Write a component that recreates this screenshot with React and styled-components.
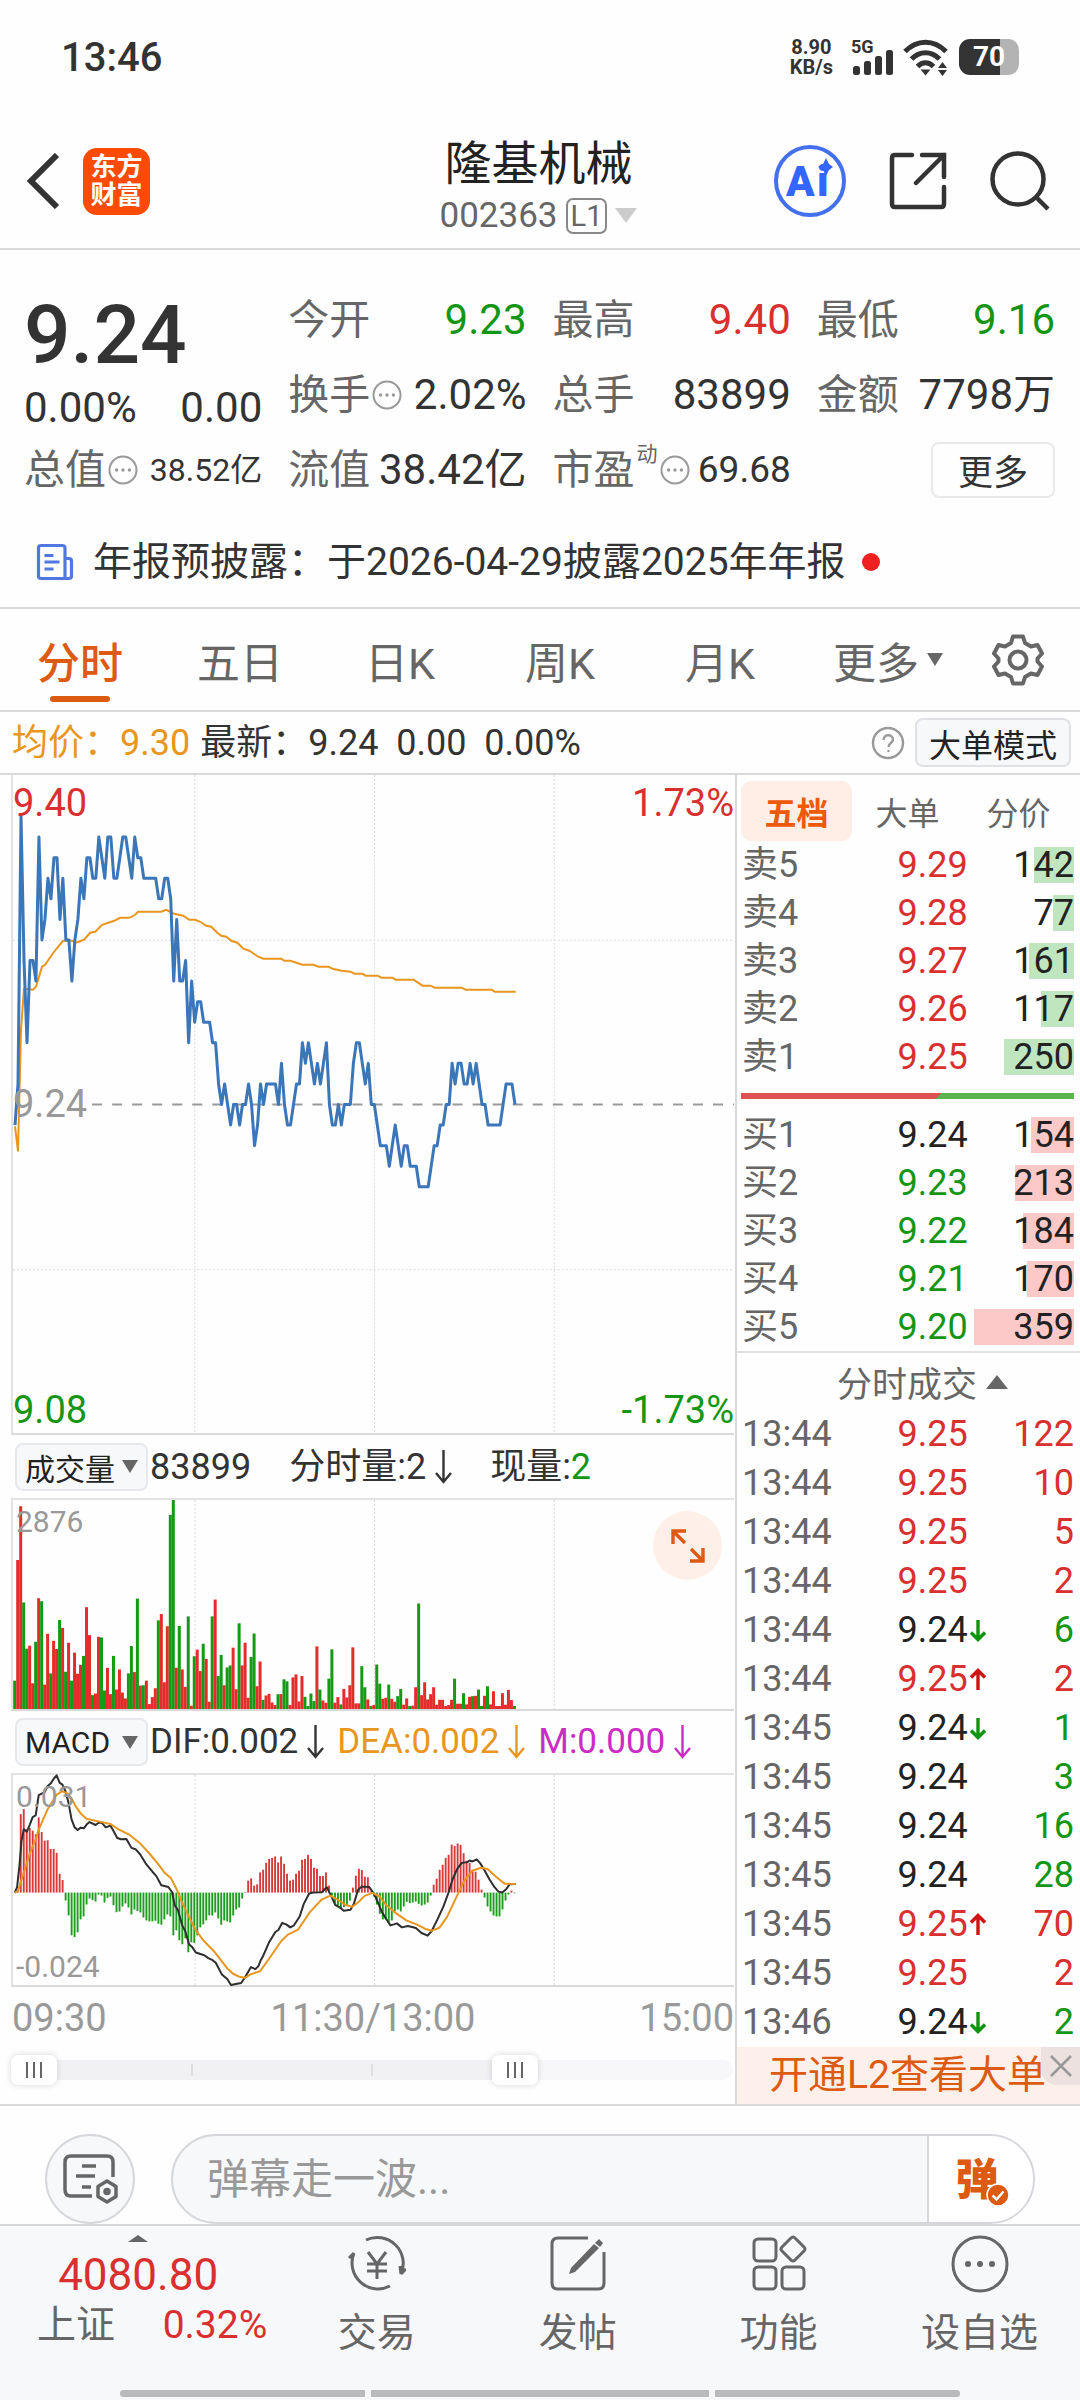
import React, { useState } from 'react';
import styled, { createGlobalStyle } from 'styled-components';

const RED = '#d92f2f';
const GREEN = '#149614';
const ORANGE = '#dd5a12';
const AMBER = '#e8961e';
const INK = '#333333';
const GREY = '#666666';
const MUTED = '#999999';
const LINE = '#d9d9d9';
const PANEL = '#f7f8fa';

const tones = { red: RED, green: GREEN, ink: INK, black: '#222222', grey: GREY, amber: AMBER, purple: '#cc2bc4' };

const GlobalStyle = createGlobalStyle`
  * {
    box-sizing: border-box;
  }

  body {
    margin: 0;
    background: #fefefe;
    color: ${INK};
    font-family: Roboto, 'Noto Sans CJK SC', sans-serif;
  }

  button, input {
    font-family: inherit;
    color: inherit;
  }

  button {
    padding: 0;
    border: none;
    background: none;
    cursor: pointer;
  }

  svg {
    display: block;
    flex: none;
  }
`;

/* ---------- data ---------- */

const quotes = [
  { label: '今开', value: '9.23', tone: 'green' },
  { label: '最高', value: '9.40', tone: 'red' },
  { label: '最低', value: '9.16', tone: 'green' },
  { label: '换手', value: '2.02%', tone: 'ink', info: true },
  { label: '总手', value: '83899', tone: 'ink' },
  { label: '金额', value: '7798万', tone: 'ink' },
];

const periods = ['分时', '五日', '日K', '周K', '月K'];

const sells = [
  ['卖5', '9.29', 142, 'red'],
  ['卖4', '9.28', 77, 'red'],
  ['卖3', '9.27', 161, 'red'],
  ['卖2', '9.26', 117, 'red'],
  ['卖1', '9.25', 250, 'red'],
];

const buys = [
  ['买1', '9.24', 154, 'black'],
  ['买2', '9.23', 213, 'green'],
  ['买3', '9.22', 184, 'green'],
  ['买4', '9.21', 170, 'green'],
  ['买5', '9.20', 359, 'green'],
];

const trades = [
  ['13:44', '9.25', '', 122, 'red'],
  ['13:44', '9.25', '', 10, 'red'],
  ['13:44', '9.25', '', 5, 'red'],
  ['13:44', '9.25', '', 2, 'red'],
  ['13:44', '9.24', 'down', 6, 'green'],
  ['13:44', '9.25', 'up', 2, 'red'],
  ['13:45', '9.24', 'down', 1, 'green'],
  ['13:45', '9.24', '', 3, 'green'],
  ['13:45', '9.24', '', 16, 'green'],
  ['13:45', '9.24', '', 28, 'green'],
  ['13:45', '9.25', 'up', 70, 'red'],
  ['13:45', '9.25', '', 2, 'red'],
  ['13:46', '9.24', 'down', 2, 'green'],
];

// minute closes, in cents above 9.24
const closes = [
  -1, 1, 14, 7, 3, 7, 7, 6, 13, 8, 9, 11, 10, 12, 12, 9, 11, 8, 8, 6,
  8, 9, 11, 10, 12, 12, 11, 11, 13, 12, 11, 13, 13, 11, 11, 12, 13, 13, 12, 11,
  13, 12, 12, 11, 11, 11, 11, 11, 10, 10, 11, 11, 10, 6, 9, 6, 6, 7, 3, 6,
  4, 5, 5, 4, 4, 4, 3, 3, 1, 0, 1, 0, -1, 0, 0, -1, 0, 0, 1, 0,
  -2, -1, 1, 0, 1, 1, 1, 1, 0, 2, 0, -1, -1, 0, 1, 1, 3, 2, 3, 2,
  1, 2, 1, 2, 3, 0, -1, -1, 0, -1, 0, 0, 0, 2, 3, 3, 2, 1, 2, 0,
  0, -1, -2, -2, -2, -3, -2, -1, -2, -3, -2, -2, -3, -3, -3, -4, -4, -4, -4, -3,
  -2, -2, -1, -1, 0, 0, 2, 1, 2, 2, 1, 1, 2, 1, 2, 1, 0, 0, -1, -1,
  -1, -1, -1, 0, 1, 1, 1, 0,
];

const average = `15,1127 18,1152 21,1030 24,989 33,990 36,987 42,967 45,965 54,952 63,941 72,941 76,943 84,940 90,933
  95,932 102,925 114,921 120,918 129,918 135,915 138,912 161,912 166,910 174,914 183,916 189,920 195,920 200,922
  206,926 211,927 217,933 221,936 226,937 231,941 237,943 243,949 249,951 258,957 263,959 281,959 284,961 290,961
  302,965 313,965 318,967 328,967 332,969 341,971 350,972 354,974 362,974 365,976 377,976 381,978 392,978 395,980
  413,980 422,986 430,986 434,988 461,988 465,990 491,990 494,992 515,992`;

// top edge of each minute bar (floor is 660); negative marks a falling minute
const volumes = [
  -574, 208, 45, -337, -477, 468, 582, -456, 324, -333, 586, 432, -552, 453, 478, -390, 414, -547, 459, -574,
  489, 553, 526, -499, 351, 436, -618, 613, 441, -443, -604, 535, 615, -499, 601, 540, 610, 628, -552, -469,
  548, -325, 589, -588, 574, 645, 624, 597, -391, 372, 579, 409, -71, -26, 535, -408, 540, 593, -379, 650,
  -500, 480, 545, -462, 508, 638, -379, 328, -560, -496, 588, -534, -528, 474, 600, -400, 528, 459, 626, -502,
  -431, 591, 516, -632, 619, 614, 640, 648, -615, 615, -570, -576, 648, 564, 555, 637, 560, -623, -651, -613,
  -636, 470, -601, 634, 641, -568, -479, 641, 624, -646, 599, 625, 588, 473, 643, 643, -530, -594, 631, -651,
  648, -525, -583, 629, 626, -586, 629, 638, -621, -599, 647, 628, -651, 650, 594, -340, 618, 579, 631, 615,
  594, 647, 632, 632, 651, 648, 632, -568, 644, 644, -612, 646, 623, -621, 620, -601, -651, 620, -591, 646,
  606, 651, 651, 612, 647, 602, 633, -651,
];

// end of each histogram bar, the zero line is at 381
const histogram = [
  381, 372, 144, 129, 190, 186, 194, 205, 154, 198, 224, 223, 249, 249, 261, 324, 343, 405, 450, 510,
  515, 501, 462, 453, 417, 399, 404, 408, 387, 390, 411, 397, 393, 419, 440, 438, 423, 414, 426, 447,
  432, 437, 441, 456, 465, 468, 468, 466, 475, 478, 462, 447, 453, 510, 495, 525, 537, 519, 561, 531,
  533, 510, 486, 477, 465, 450, 450, 441, 459, 478, 465, 468, 471, 450, 432, 426, 399, 379, 345, 338,
  360, 356, 320, 312, 291, 279, 276, 272, 290, 272, 294, 324, 345, 342, 324, 315, 282, 279, 267, 279,
  306, 309, 331, 331, 320, 360, 390, 414, 420, 430, 425, 418, 405, 366, 330, 309, 313, 333, 335, 378,
  393, 417, 445, 462, 462, 471, 465, 438, 432, 438, 423, 409, 413, 411, 408, 415, 420, 417, 411, 390,
  357, 339, 312, 297, 276, 267, 236, 240, 233, 237, 262, 285, 291, 312, 318, 342, 372, 396, 423, 438,
  450, 453, 453, 432, 405, 387, 375, 383,
];

const dif = `43,381 50,365 57,300 63,225 70,190 79,197 88,175 96,153 105,148 114,87 123,82 131,78 140,60 149,52 158,38
  167,27 176,50 184,55 193,75 202,110 211,160 220,184 229,192 238,185 247,187 256,175 264,168 282,177 291,170 300,170
  312,184 326,179 335,195 346,216 357,220 373,219 388,246 400,250 414,266 432,296 450,318 462,332 476,359 497,364
  508,380 516,420 525,433 538,480 547,498 558,537 567,545 578,562 603,570 615,579 626,584 637,593 655,628 671,642
  682,660 700,656 712,654 724,636 741,606 754,612 763,603 770,585 778,570 795,530 813,500 822,494 833,473 845,477
  857,486 867,481 885,453 897,415 913,384 925,381 950,380 965,365 975,385 990,418 1005,427 1015,436 1035,433 1045,415
  1057,373 1068,363 1090,364 1104,384 1115,408 1128,440 1140,460 1153,480 1163,477 1172,474 1187,486 1205,482
  1228,488 1245,503 1263,511 1275,497 1292,462 1310,422 1325,380 1337,340 1350,310 1363,292 1380,289 1387,284
  1395,287 1408,281 1418,292 1430,312 1445,340 1460,364 1472,378 1483,381 1495,371 1505,356 1523,355`;

const dea = `43,381 52,377 70,320 88,262 105,220 114,190 123,170 140,130 158,100 167,85 184,75 200,82 211,98 225,123
  238,142 255,158 290,166 326,174 350,190 380,205 414,233 441,263 467,295 485,320 505,338 521,370 538,412 556,450
  575,490 600,525 635,562 671,610 688,626 706,635 724,638 740,628 768,618 795,580 830,528 850,508 880,493 915,440
  950,402 975,390 1000,404 1020,418 1040,424 1058,410 1077,391 1100,382 1120,392 1140,418 1165,440 1200,465 1230,477
  1255,490 1275,496 1298,487 1320,455 1350,390 1370,347 1395,315 1420,306 1440,310 1465,333 1490,354 1523,355`;

/* ---------- status bar and header ---------- */

const StatusBar = styled.div`
  display: flex;
  align-items: center;
  gap: 10px;
  height: 114px;
  padding: 0 61px;
`;

const Clock = styled.span`
  flex: 1;
  font-size: 40px;
  font-weight: 500;
`;

const NetSpeed = styled.span`
  margin-right: 8px;
  font-size: 20px;
  font-weight: 700;
  line-height: 20px;
  text-align: center;
`;

const Battery = styled.span`
  position: relative;
  width: 60px;
  height: 36px;
  border-radius: 11px;
  background: linear-gradient(90deg, ${INK} 68%, #b3b3b3 68%);
  color: #ffffff;
  font-size: 28px;
  font-weight: 700;
  line-height: 36px;
  text-align: center;
`;

const Header = styled.header`
  display: grid;
  grid-template-columns: 1fr auto 1fr;
  align-items: center;
  height: 136px;
  padding: 0 30px 0 27px;
  border-bottom: 2px solid ${LINE};
`;

const HeaderSide = styled.div`
  display: flex;
  align-items: center;
  justify-content: ${({ $end }) => ($end ? 'flex-end' : 'flex-start')};
  gap: ${({ $end }) => ($end ? '43px' : '23px')};
`;

const Logo = styled.span`
  width: 67px;
  height: 67px;
  padding-top: 5px;
  border-radius: 14px;
  background: #fd4a05;
  color: #ffffff;
  font-size: 26px;
  font-weight: 700;
  line-height: 28px;
  text-align: center;
`;

const Stock = styled.div`
  padding-top: 8px;
`;

const StockName = styled.h1`
  margin: 0;
  font-size: 47px;
  font-weight: 400;
  line-height: 61px;
  color: #222222;
  text-align: center;
`;

const StockCode = styled.button`
  display: flex;
  align-items: center;
  gap: 8px;
  color: ${GREY};
  font-size: 35px;
  line-height: 44px;
`;

const Level = styled.span`
  padding: 0 3px;
  border: 2px solid #888888;
  border-radius: 7px;
  font-size: 29px;
  line-height: 32px;
`;

const Caret = styled.i`
  width: 0;
  height: 0;
  border: ${({ $size = 8 }) => $size}px solid transparent;
  border-${({ $up }) => ($up ? 'top' : 'bottom')}-width: 0;
  border-${({ $up }) => ($up ? 'bottom' : 'top')}: ${({ $tall = 12 }) => $tall}px solid ${({ $color = GREY }) => $color};
`;

/* ---------- quotes ---------- */

const Quotes = styled.section`
  display: grid;
  grid-template-columns: repeat(4, 1fr);
  grid-template-rows: repeat(3, 75px);
  column-gap: 26px;
  padding: 32px 25px 0 24px;
`;

const Current = styled.div`
  grid-row: span 2;
`;

const Price = styled.strong`
  display: block;
  height: 102px;
  font-size: 82px;
  font-weight: 500;
  line-height: 106px;
`;

const Quote = styled.div`
  display: flex;
  align-items: center;
  justify-content: space-between;
  color: ${({ $tone }) => tones[$tone]};
  font-size: ${({ $size = 42 }) => $size}px;
  line-height: 48px;
  white-space: nowrap;
`;

const QuoteLabel = styled.span`
  display: flex;
  align-items: center;
  gap: 2px;
  color: ${GREY};
  font-size: 41px;
`;

const Sup = styled.sup`
  align-self: flex-start;
  font-size: 21px;
  line-height: 16px;
`;

const MoreButton = styled.button`
  justify-self: end;
  align-self: center;
  width: 124px;
  height: 56px;
  border: 2px solid #e9e9e9;
  border-radius: 8px;
  font-size: 35px;
`;

const Notice = styled.a`
  display: flex;
  align-items: center;
  height: 102px;
  padding: 10px 36px 0;
  border-bottom: 2px solid ${LINE};
  color: ${INK};
  font-size: 39px;
  line-height: 50px;
  text-decoration: none;
`;

const NoticeText = styled.span`
  margin: 0 16px 0 19px;
`;

const RedDot = styled.i`
  width: 18px;
  height: 18px;
  border-radius: 50%;
  background: #f02020;
`;

/* ---------- period tabs ---------- */

const Periods = styled.nav`
  display: flex;
  height: 103px;
  padding-right: 20px;
  border-bottom: 2px solid ${LINE};
`;

const PeriodTab = styled.button`
  position: relative;
  display: flex;
  flex: ${({ $grow = 160 }) => $grow} 1 0;
  align-items: center;
  justify-content: center;
  gap: 8px;
  color: ${({ $active }) => ($active ? ORANGE : GREY)};
  font-size: 43px;
  font-weight: ${({ $active }) => ($active ? 500 : 400)};

  &::after {
    content: '';
    position: absolute;
    bottom: 8px;
    width: 60px;
    height: 6px;
    border-radius: 3px;
    background: ${({ $active }) => ($active ? ORANGE : 'transparent')};
  }
`;

const Summary = styled.div`
  display: flex;
  align-items: center;
  gap: 10px;
  height: 63px;
  padding: 0 9px 0 12px;
  border-bottom: 2px solid ${LINE};
  font-size: 36px;
  line-height: 44px;
  white-space: pre;
`;

const Spacer = styled.span`
  flex: 1;
`;

const ModeButton = styled.button`
  height: 49px;
  padding: 0 12px;
  border: 2px solid #dfe1e4;
  border-radius: 8px;
  background: ${PANEL};
  color: #222222;
  font-size: 32px;
`;

const Tint = styled.span`
  color: ${({ $tone }) => tones[$tone]};
`;

/* ---------- charts ---------- */

const Board = styled.main`
  display: grid;
  grid-template-columns: 735fr 345fr;
  border-bottom: 2px solid ${LINE};
`;

const Charts = styled.section`
  min-width: 0;
  padding: 0 1px 0 11px;
`;

const Plot = styled.div`
  position: relative;
  height: ${({ $height }) => $height}px;
  border-left: 2px solid #e2e2e2;
  border-bottom: 2px solid ${LINE};
  border-top: ${({ $top }) => ($top ? '2px solid #e2e2e2' : 'none')};

  > svg {
    width: 100%;
    height: 100%;
    overflow: visible;
  }
`;

const PlotLabel = styled.span`
  position: absolute;
  color: ${({ $tone }) => tones[$tone] || MUTED};
  font-size: ${({ $small }) => ($small ? 30 : 38)}px;
  line-height: 40px;
  ${({ $side = 'left' }) => $side}: ${({ $small }) => ($small ? 3 : 0)}px;
  ${({ $at, $small }) => {
    if ($at === 'bottom') return `bottom: ${$small ? -2 : 3}px;`;
    if ($at === 'middle') return 'top: calc(50% - 20px);';
    return `top: ${$small ? 2 : 8}px;`;
  }}
`;

const IndicatorRow = styled.div`
  display: flex;
  align-items: center;
  gap: ${({ $gap }) => $gap}px;
  height: ${({ $height = 64 }) => $height}px;
  padding-left: 4px;
  font-size: ${({ $size }) => $size}px;
  line-height: 44px;
  white-space: nowrap;
`;

const IndicatorPick = styled.button`
  display: flex;
  align-items: center;
  justify-content: space-between;
  width: 133px;
  height: 48px;
  margin-right: ${({ $gap }) => 2 - $gap}px;
  padding: 0 8px;
  border: 2px solid #e6e8ec;
  border-radius: 8px;
  background: ${PANEL};
  color: #222222;
  font-size: 30px;
`;

const Reading = styled.span`
  display: flex;
  align-items: center;
  gap: 9px;
  color: ${({ $tone }) => tones[$tone]};
`;

const ExpandButton = styled.button`
  position: absolute;
  top: 11px;
  right: 12px;
  display: grid;
  place-items: center;
  width: 69px;
  height: 69px;
  border-radius: 50%;
  background: #fef0e8;
`;

const TimeAxis = styled.div`
  display: flex;
  justify-content: space-between;
  padding: 9px 0 0 1px;
  color: ${MUTED};
  font-size: 38px;
  line-height: 44px;
`;

const Range = styled.div`
  position: relative;
  height: 20px;
  margin: 20px 1px 24px 0;
  border-radius: 10px;
  background:
    linear-gradient(#dedee0, #dedee0) 25% 50% / 2px 12px no-repeat,
    linear-gradient(#dedee0, #dedee0) 50% 50% / 2px 12px no-repeat,
    linear-gradient(90deg, #f1f1f3 70%, #f7f7fa 70%);
`;

const Thumb = styled.input`
  position: absolute;
  left: 0;
  top: -5px;
  width: 100%;
  height: 30px;
  margin: 0;
  appearance: none;
  background: none;
  pointer-events: none;

  &::-webkit-slider-thumb {
    appearance: none;
    width: 46px;
    height: 30px;
    border-radius: 7px;
    box-shadow: 0 0 6px rgba(0, 0, 0, 0.16);
    background:
      linear-gradient(#666, #666) 15px 50% / 2px 16px no-repeat,
      linear-gradient(#666, #666) 22px 50% / 2px 16px no-repeat,
      linear-gradient(#666, #666) 29px 50% / 2px 16px no-repeat,
      #ffffff;
    pointer-events: auto;
  }
`;

/* ---------- order book ---------- */

const Side = styled.aside`
  display: flex;
  flex-direction: column;
  min-width: 0;
  border-left: 2px solid ${LINE};
`;

const SideTabs = styled.div`
  display: grid;
  grid-template-columns: repeat(3, 1fr);
  margin: 6px 6px 0 4px;
`;

const SideTab = styled.button`
  height: 60px;
  border-radius: 10px;
  background: ${({ $active }) => ($active ? '#feeee6' : 'none')};
  color: ${({ $active }) => ($active ? '#ee5a0c' : GREY)};
  font-size: 32px;
  font-weight: ${({ $active }) => ($active ? 700 : 400)};
`;

const Book = styled.div`
  padding: 0 6px 0 4px;
`;

const Table = styled.table`
  width: 100%;
  border-collapse: collapse;
  table-layout: fixed;
  font-size: 36px;

  td {
    position: relative;
    height: ${({ $row }) => $row}px;
    padding: 0;
    line-height: ${({ $row }) => $row}px;
    white-space: nowrap;
  }
`;

const LabelCell = styled.td`
  width: 47%;
  color: ${GREY};
  text-indent: 1px;
`;

const PriceCell = styled.td`
  width: 21%;
  color: ${({ $tone }) => tones[$tone]};

  svg {
    display: inline-block;
    margin-left: 2px;
  }
`;

const SizeCell = styled.td`
  color: ${({ $tone }) => tones[$tone]};
  text-align: right;

  span {
    position: relative;
  }
`;

const SizeBar = styled.i`
  position: absolute;
  top: 6px;
  right: 0;
  height: 36px;
  background: ${({ $buy }) => ($buy ? '#fcc8c8' : '#c0e6c0')};
`;

const Balance = styled.div`
  height: 6px;
  margin: 12px 0;
  background: linear-gradient(135deg, #dc5050 59%, #5cb450 59%);
`;

const TradesHead = styled.button`
  display: flex;
  align-items: center;
  justify-content: center;
  gap: 9px;
  height: 59px;
  padding-left: 28px;
  border-top: 2px solid #e2e2e2;
  color: ${GREY};
  font-size: 35px;
`;

const Promo = styled.div`
  position: relative;
  flex: 1;
  background: #fdf0ea;
`;

const PromoLink = styled.a`
  display: block;
  padding-right: 2px;
  color: ${ORANGE};
  font-size: 39px;
  line-height: 57px;
  text-align: center;
  text-decoration: none;
`;

const PromoClose = styled.button`
  position: absolute;
  top: 0;
  right: 0;
  display: grid;
  place-items: center;
  width: 39px;
  height: 38px;
  border-bottom-left-radius: 16px;
  background: #ece1de;
`;

/* ---------- comment bar and bottom navigation ---------- */

const CommentBar = styled.form`
  display: flex;
  gap: 36px;
  padding: 28px 45px 0;
  border-bottom: 2px solid ${LINE};
`;

const RoundButton = styled.button`
  display: grid;
  place-items: center;
  width: 90px;
  height: 90px;
  border: 2px solid #d5d7da;
  border-radius: 50%;
  background: ${PANEL};
`;

const CommentBox = styled.div`
  display: flex;
  flex: 1;
  height: 90px;
  overflow: hidden;
  border: 2px solid #d5d7da;
  border-radius: 45px;
  background: ${PANEL};
`;

const CommentInput = styled.input`
  flex: 1;
  min-width: 0;
  padding: 0 34px;
  border: none;
  background: none;
  font-size: 42px;
  outline: none;

  &::placeholder {
    color: ${MUTED};
    opacity: 1;
  }
`;

const BarrageButton = styled.button`
  position: relative;
  width: 106px;
  padding: 0 8px 6px 0;
  border-left: 2px solid #d5d7da;
  background: #ffffff;
  color: ${ORANGE};
  font-size: 43px;
  font-weight: 900;

  svg {
    position: absolute;
    left: 57px;
    top: 47px;
  }
`;

const BottomNav = styled.nav`
  display: grid;
  grid-template-columns: 11fr repeat(4, 8fr);
  height: 163px;
  background: ${PANEL};
`;

const IndexLink = styled.a`
  display: flex;
  flex-direction: column;
  align-items: center;
  padding-top: 9px;
  color: ${RED};
  font-size: 44px;
  line-height: 50px;
  text-decoration: none;
`;

const IndexValue = styled.span`
  margin-top: 8px;
`;

const IndexChange = styled.span`
  display: flex;
  align-self: stretch;
  justify-content: space-between;
  padding: 0 9px 0 37px;
  font-size: 39px;
`;

const NavItem = styled.a`
  display: flex;
  flex-direction: column;
  align-items: center;
  gap: 14px;
  padding-top: 9px;
  color: ${GREY};
  font-size: 39px;
  line-height: 52px;
  text-decoration: none;
`;

const HomeBar = styled.div`
  display: grid;
  grid-template-columns: 245fr 338fr 245fr;
  gap: 6px;
  padding: 1px 120px 3px;
  background: ${PANEL};

  i {
    height: 7px;
    background: #b9babc;
  }

  i:first-child {
    border-radius: 4px 0 0 4px;
  }

  i:last-child {
    border-radius: 0 4px 4px 0;
  }
`;

/* ---------- drawings ---------- */

const InfoIcon = () => (
  <svg width="30" height="30" viewBox="0 0 30 30" fill={MUTED}>
    <circle cx="15" cy="15" r="13.5" fill="none" stroke={MUTED} strokeWidth="2" />
    <circle cx="8.6" cy="15" r="1.7" />
    <circle cx="15" cy="15" r="1.7" />
    <circle cx="21.4" cy="15" r="1.7" />
  </svg>
);

const DownArrow = () => (
  <svg width="17" height="34" viewBox="0 0 17 34" fill="none" stroke="currentColor" strokeWidth="2.4">
    <path d="M8.5 0V32M1 23l7.5 9L16 23" />
  </svg>
);

const TickArrow = ({ dir }) => (
  <svg width="16" height="23" viewBox="0 0 16 23" fill="none" stroke={dir === 'up' ? '#d01212' : '#0f940f'} strokeWidth="3.4">
    <path d={dir === 'up' ? 'M8 22V2M1 9.5L8 2.5l7 7' : 'M8 1v20M1 13.500l7 7 7-7'} />
  </svg>
);

const SignalIcon = () => (
  <svg width="42" height="42" viewBox="0 0 42 42" fill={INK}>
    <text x="0" y="17" fontSize="18" fontWeight="700" fontFamily="Roboto, sans-serif">5G</text>
    <rect x="2" y="30" width="7" height="9" rx="2.500" />
    <rect x="13" y="25" width="7" height="14" rx="2.500" />
    <rect x="24" y="20" width="7" height="19" rx="2.500" />
    <rect x="35" y="14" width="7" height="25" rx="2.500" />
  </svg>
);

const WifiIcon = () => (
  <svg width="46" height="38" viewBox="0 0 46 38" fill="none" stroke={INK} strokeWidth="5">
    <path d="M2 13.500C14 1 31 1 43 13.500" />
    <path d="M8.500 21c8-8.500 20-8.500 28 0" />
    <path d="M14.500 28.500c5-5 11-5 16 0" />
    <path d="M17.500 31.500h10l-5 6z" fill={INK} stroke="none" />
    <path d="M35 30l4.500-6 4.500 6zM35 32h9l-4.500 6z" fill={INK} stroke="none" />
  </svg>
);

const AiIcon = () => (
  <svg width="72" height="74" viewBox="0 0 72 74">
    <circle cx="36" cy="37" r="34" fill="none" stroke="#4470ee" strokeWidth="4" />
    <g fontSize="42" fontWeight="900" fontFamily="Roboto, sans-serif" fill="#3366ff">
      <text x="12" y="52">A</text>
      <text x="43" y="52">i</text>
    </g>
    <path d="M52 14l3 6 4 3-4 3-3 6-3-6-5-3 5-3z" fill="#3366ff" />
  </svg>
);

const ShareIcon = () => (
  <svg width="58" height="60" viewBox="0 0 58 60" fill="none" stroke={INK} strokeWidth="4.500">
    <path d="M23 4H6q-3 0-3 3v46q0 3 3 3h46q3 0 3-3V36" strokeLinecap="round" />
    <path d="M33 4h22v22M55 4L27 32" strokeLinecap="round" />
  </svg>
);

const SearchIcon = () => (
  <svg width="60" height="60" viewBox="0 0 60 60" fill="none" stroke={INK} strokeWidth="4.500">
    <circle cx="28" cy="28" r="25.500" />
    <path d="M46 46l12 12" />
  </svg>
);

const NewsIcon = () => (
  <svg width="38" height="38" viewBox="0 0 38 38" fill="none" stroke="#5078e0" strokeWidth="3.200" strokeLinejoin="round">
    <path d="M29 35.500H5q-2.500 0-2.500-2.500V5Q2.500 2.500 5 2.500h21Q29 2.500 29 5zM29 15.500h4q2.500 0 2.500 2.500v15q0 2.500-2.500 2.500h-4" />
    <path d="M8.500 12.500h9M8.500 19h15M8.500 26h9" />
  </svg>
);

const GearIcon = () => (
  <svg width="52" height="52" viewBox="0 0 52 52" fill="none" stroke={GREY} strokeWidth="4" strokeLinejoin="round">
    <path d="M21 2.500h10l2 6.500 6 3.500 6.500-1.500 4.500 8.500-4.500 5v3l4.500 5-4.500 8.500-6.500-1.500-6 3.500-2 6.500H21l-2-6.500-6-3.500L6.500 41 2 32.500l4.500-5v-3L2 19.500 6.500 11l6.500 1.500L19 9z" />
    <circle cx="26" cy="26" r="8.500" />
  </svg>
);

const HelpIcon = () => (
  <svg width="34" height="34" viewBox="0 0 34 34" fill="none" stroke={MUTED} strokeWidth="2.400">
    <circle cx="17" cy="17" r="15" />
    <path d="M12.500 14c0-6.500 9.500-6 9.500-.5 0 3.500-4.500 3.500-4.500 7.500" />
    <circle cx="17.400" cy="25" r="1.200" fill={MUTED} stroke="none" />
  </svg>
);

const navIcons = {
  交易: (
    <>
      <path d="M18 5A26 26 0 0 1 53 39M53 39l5-5M53 39l-1-8M42 51A26 26 0 0 1 6 18M6 18l-5 5" />
      <path d="M20 17l9 12 9-12M29 29v15M19 29h20M19 36h20" />
    </>
  ),
  发帖: (
    <>
      <path d="M39 3H9Q3 3 3 9v39q0 6 6 6h40q6 0 6-6V17" />
      <path d="M50 4l4 4-3 4-5-4zM45 9l5 4-24 24-6 2 2-6z" fill={GREY} stroke="none" />
    </>
  ),
  功能: (
    <>
      <rect x="4" y="4" width="22" height="22" rx="4" />
      <rect x="4" y="32" width="22" height="22" rx="4" />
      <rect x="32" y="32" width="22" height="22" rx="4" />
      <path d="M41 3q2-2 4 0l9 9q2 2 0 4l-9 9q-2 2-4 0l-9-9q-2-2 0-4z" />
    </>
  ),
  设自选: (
    <>
      <circle cx="29" cy="29" r="27" />
      <g fill={GREY} stroke="none">
        <circle cx="17" cy="29" r="3" />
        <circle cx="29" cy="29" r="3" />
        <circle cx="41" cy="29" r="3" />
      </g>
    </>
  ),
};

/* ---------- chart parts ---------- */

const PriceChart = () => {
  const points = closes.map((c, i) => `${(15 + i * 2.99).toFixed(1)},${(1105 - c * 20.6).toFixed(1)}`).join(' ');

  return (
    <Plot $height={660}>
      <svg viewBox="13 775 720 659" preserveAspectRatio="none" fill="none">
        <g stroke="#dcdcdc" strokeDasharray="2 2">
          <path d="M194.500 775V1434M374 775V1434M553.500 775V1434M13 940.500H733M13 1270.500H733" />
        </g>
        <path d="M92 1105H733" stroke={MUTED} strokeWidth="2" strokeDasharray="10 10" />
        <polyline points={average} stroke={AMBER} strokeWidth="2" />
        <polyline points={points} stroke="#3a76b8" strokeWidth="3" strokeLinejoin="round" />
      </svg>
      <PlotLabel $tone="red">9.40</PlotLabel>
      <PlotLabel $tone="red" $side="right">1.73%</PlotLabel>
      <PlotLabel $at="middle">9.24</PlotLabel>
      <PlotLabel $tone="green" $at="bottom">9.08</PlotLabel>
      <PlotLabel $tone="green" $at="bottom" $side="right">-1.73%</PlotLabel>
    </Plot>
  );
};

const GridLines = () => (
  <path
    d="M576 26V660M1106 26V660M1637 26V660"
    stroke="#d8d8d8"
    strokeDasharray="2 2"
    vectorEffect="non-scaling-stroke"
  />
);

const VolumeChart = () => (
  <Plot $height={213} $top>
    <svg viewBox="38 26 2130 634" preserveAspectRatio="none">
      <GridLines />
      {volumes.map((v, i) => (
        <rect
          key={i}
          x={38.6 + i * 8.84}
          y={Math.abs(v)}
          width="8.84"
          height={660 - Math.abs(v)}
          fill={v < 0 ? '#149a14' : '#e52c2c'}
        />
      ))}
    </svg>
    <PlotLabel $small>2876</PlotLabel>
    <ExpandButton aria-label="全屏">
      <svg width="34" height="34" viewBox="0 0 34 34" fill="none" stroke={ORANGE} strokeWidth="3.400">
        <path d="M2 15V2h13M2 2l12 12M32 19v13H19M32 32L20 20" />
      </svg>
    </ExpandButton>
  </Plot>
);

const MacdChart = () => (
  <Plot $height={214} $top>
    <svg viewBox="38 26 2130 634" preserveAspectRatio="none" fill="none">
      <GridLines />
      {histogram.map((v, i) => (
        <rect
          key={i}
          x={40.4 + i * 8.84}
          y={Math.min(v, 381)}
          width="5.6"
          height={Math.abs(v - 381)}
          fill={v < 381 ? '#d63a3a' : '#1d9c1d'}
        />
      ))}
      <g strokeWidth="2" strokeLinejoin="round">
        <polyline points={dif} stroke="#2e2e2e" vectorEffect="non-scaling-stroke" />
        <polyline points={dea} stroke={AMBER} vectorEffect="non-scaling-stroke" />
      </g>
    </svg>
    <PlotLabel $small>0.031</PlotLabel>
    <PlotLabel $small $at="bottom">-0.024</PlotLabel>
  </Plot>
);

const BookSide = ({ rows, buy }) => (
  <Table $row={48}>
    <tbody>
      {rows.map(([label, price, size, tone]) => (
        <tr key={label}>
          <LabelCell>{label}</LabelCell>
          <PriceCell $tone={tone}>{price}</PriceCell>
          <SizeCell $tone="black">
            <SizeBar $buy={buy} style={{ width: `${(size / 359) * 94}%` }} />
            <span>{size}</span>
          </SizeCell>
        </tr>
      ))}
    </tbody>
  </Table>
);

const App = () => {
  const [period, setPeriod] = useState('分时');
  const [from, setFrom] = useState(0);
  const [to, setTo] = useState(711);

  return (
    <>
      <GlobalStyle />
      <StatusBar>
        <Clock>13:46</Clock>
        <NetSpeed>8.90<br />KB/s</NetSpeed>
        <SignalIcon />
        <WifiIcon />
        <Battery>70</Battery>
      </StatusBar>

      <Header>
        <HeaderSide>
          <button aria-label="返回">
            <svg width="33" height="56" viewBox="0 0 33 56" fill="none" stroke={INK} strokeWidth="6">
              <path d="M30 2L4 28l26 26" />
            </svg>
          </button>
          <Logo>东方<br />财富</Logo>
        </HeaderSide>
        <Stock>
          <StockName>隆基机械</StockName>
          <StockCode>
            002363
            <Level>L1</Level>
            <Caret $size={11} $tall={15} $color="#cccccc" />
          </StockCode>
        </Stock>
        <HeaderSide $end>
          <button aria-label="智能助手"><AiIcon /></button>
          <button aria-label="分享"><ShareIcon /></button>
          <button aria-label="搜索"><SearchIcon /></button>
        </HeaderSide>
      </Header>

      <Quotes>
        <Current>
          <Price>9.24</Price>
          <Quote $tone="ink"><span>0.00%</span><span>0.00</span></Quote>
        </Current>
        {quotes.map((q) => (
          <Quote key={q.label} $tone={q.tone}>
            <QuoteLabel>{q.label}{q.info && <InfoIcon />}</QuoteLabel>
            {q.value}
          </Quote>
        ))}
        <Quote $tone="ink" $size={32}><QuoteLabel>总值<InfoIcon /></QuoteLabel>38.52亿</Quote>
        <Quote $tone="ink"><QuoteLabel>流值</QuoteLabel>38.42亿</Quote>
        <Quote $tone="ink" $size={37}>
          <QuoteLabel>市盈<Sup>动</Sup><InfoIcon /></QuoteLabel>69.68
        </Quote>
        <MoreButton>更多</MoreButton>
      </Quotes>

      <Notice href="#notice">
        <NewsIcon />
        <NoticeText>年报预披露：于2026-04-29披露2025年年报</NoticeText>
        <RedDot />
      </Notice>

      <Periods>
        {periods.map((p) => (
          <PeriodTab key={p} $active={p === period} onClick={() => setPeriod(p)}>{p}</PeriodTab>
        ))}
        <PeriodTab $grow={176}>更多<Caret $size={8} $tall={13} /></PeriodTab>
        <PeriodTab $grow={84} aria-label="设置"><GearIcon /></PeriodTab>
      </Periods>

      <Summary>
        <Tint $tone="amber">均价：9.30</Tint>
        <span>最新：9.24  0.00  0.00%</span>
        <Spacer />
        <HelpIcon />
        <ModeButton>大单模式</ModeButton>
      </Summary>

      <Board>
        <Charts>
          <PriceChart />
          <IndicatorRow $gap={38} $height={63} $size={36}>
            <IndicatorPick $gap={38}>成交量<Caret $size={8} $tall={13} /></IndicatorPick>
            <Reading $tone="ink">83899</Reading>
            <Reading $tone="ink">分时量:2<DownArrow /></Reading>
            <span>现量:<Tint $tone="green">2</Tint></span>
          </IndicatorRow>
          <VolumeChart />
          <IndicatorRow $gap={13} $height={62} $size={35}>
            <IndicatorPick $gap={13}>MACD<Caret $size={8} $tall={13} /></IndicatorPick>
            <Reading $tone="ink">DIF:0.002<DownArrow /></Reading>
            <Reading $tone="amber">DEA:0.002<DownArrow /></Reading>
            <Reading $tone="purple">M:0.000<DownArrow /></Reading>
          </IndicatorRow>
          <MacdChart />
          <TimeAxis>
            <span>09:30</span>
            <span>11:30/13:00</span>
            <span>15:00</span>
          </TimeAxis>
          <Range>
            <Thumb type="range" aria-label="开始时间" max="1000" value={from} onChange={(e) => setFrom(e.target.value)} />
            <Thumb type="range" aria-label="结束时间" max="1000" value={to} onChange={(e) => setTo(e.target.value)} />
          </Range>
        </Charts>

        <Side>
          <SideTabs>
            <SideTab $active>五档</SideTab>
            <SideTab>大单</SideTab>
            <SideTab>分价</SideTab>
          </SideTabs>
          <Book>
            <BookSide rows={sells} />
            <Balance />
            <BookSide rows={buys} buy />
          </Book>
          <TradesHead>分时成交<Caret $up $size={11} $tall={14} /></TradesHead>
          <Book>
            <Table $row={49}>
              <tbody>
                {trades.map(([time, price, dir, size, tone], i) => (
                  <tr key={i}>
                    <LabelCell>{time}</LabelCell>
                    <PriceCell $tone={price === '9.24' ? 'black' : 'red'}>
                      {price}{dir && <TickArrow dir={dir} />}
                    </PriceCell>
                    <SizeCell $tone={tone}>{size}</SizeCell>
                  </tr>
                ))}
              </tbody>
            </Table>
          </Book>
          <Promo>
            <PromoLink href="#l2">开通L2查看大单</PromoLink>
            <PromoClose aria-label="关闭">
              <svg width="22" height="22" viewBox="0 0 22 22" stroke={MUTED} strokeWidth="2.500">
                <path d="M1 1l20 20M21 1L1 21" />
              </svg>
            </PromoClose>
          </Promo>
        </Side>
      </Board>

      <CommentBar onSubmit={(e) => e.preventDefault()}>
        <RoundButton type="button" aria-label="弹幕设置">
          <svg width="56" height="52" viewBox="0 0 56 52" fill="none" stroke={GREY} strokeWidth="3.500">
            <path d="M30 43H9q-6 0-6-6V9q0-6 6-6h36q6 0 6 6v15" />
            <path d="M20 13h14M14 23h19M20 34h9" />
            <path d="M45 28l9 5.500v10L45 49l-9-5.500v-10z" strokeLinejoin="round" />
            <circle cx="45" cy="38.500" r="2" />
          </svg>
        </RoundButton>
        <CommentBox>
          <CommentInput aria-label="弹幕" placeholder="弹幕走一波..." />
          <BarrageButton type="button">
            弹
            <svg width="24" height="24" viewBox="0 0 24 24" fill="none">
              <circle cx="12" cy="12" r="11" fill={ORANGE} stroke="#ffffff" strokeWidth="1.500" />
              <path d="M6.500 12.500l4 4 7-8" stroke="#ffffff" strokeWidth="2.500" />
            </svg>
          </BarrageButton>
        </CommentBox>
      </CommentBar>

      <BottomNav>
        <IndexLink href="#index">
          <Caret $up $size={10} $tall={7} />
          <IndexValue>4080.80</IndexValue>
          <IndexChange><Tint $tone="grey">上证</Tint>0.32%</IndexChange>
        </IndexLink>
        {Object.entries(navIcons).map(([name, icon]) => (
          <NavItem key={name} href={`#${name}`}>
            <svg width="58" height="58" viewBox="0 0 58 58" fill="none" stroke={GREY} strokeWidth="3">{icon}</svg>
            {name}
          </NavItem>
        ))}
      </BottomNav>
      <HomeBar><i /><i /><i /></HomeBar>
    </>
  );
};

export default App;
